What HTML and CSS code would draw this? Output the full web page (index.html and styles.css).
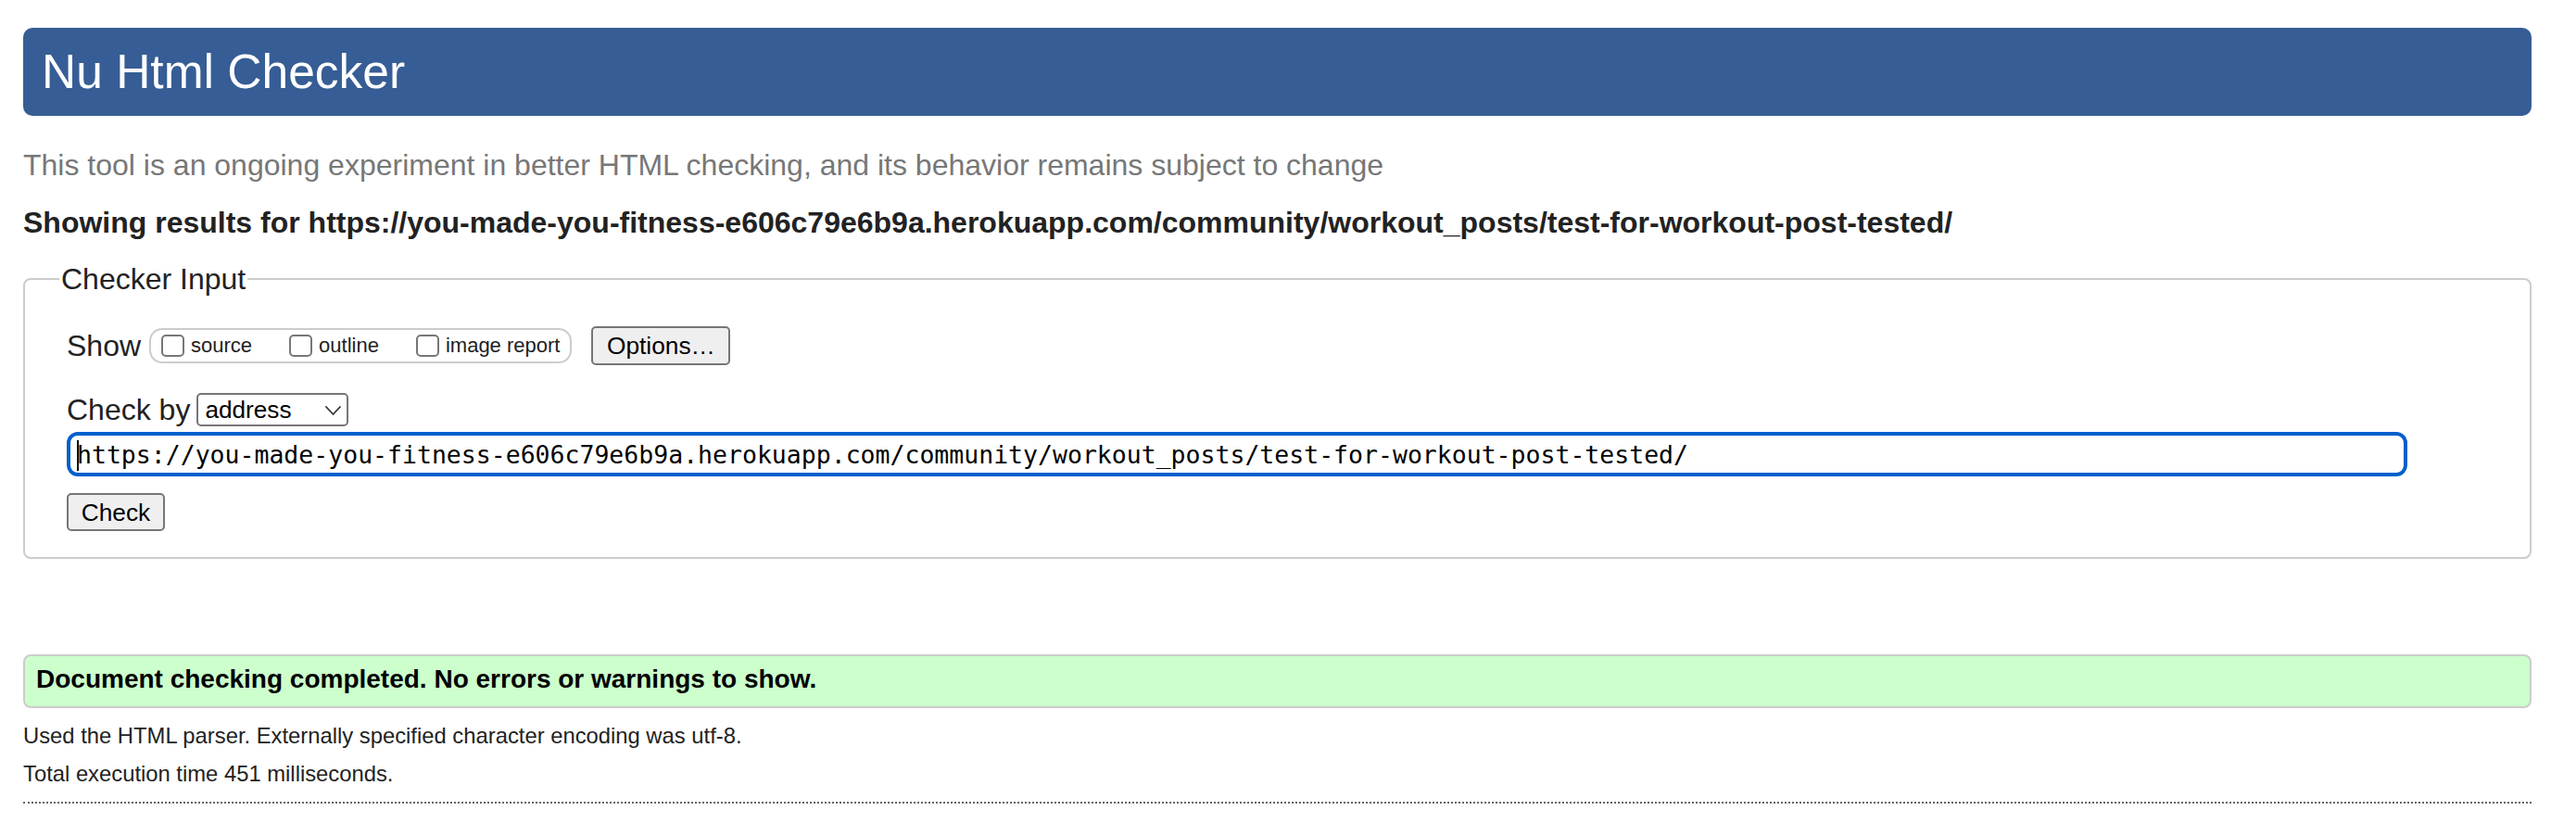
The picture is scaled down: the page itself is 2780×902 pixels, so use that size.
FILE: index.html
```html
<!DOCTYPE html>
<html lang="en">
<head>
<meta charset="utf-8">
<title>Nu Html Checker</title>
<link rel="stylesheet" href="styles.css">
</head>
<body>
<header class="masthead"><h1 class="title">Nu Html Checker</h1></header>
<p class="intro">This tool is an ongoing experiment in better HTML checking, and its behavior remains subject to change</p>
<p class="results-for">Showing results for https://you-made-you-fitness-e606c79e6b9a.herokuapp.com/community/workout_posts/test-for-workout-post-tested/</p>
<form class="checker">
  <fieldset class="checker-fieldset">
    <legend class="checker-legend">Checker Input</legend>
    <div class="row row-show">
      <span class="row-label">Show</span>
      <span class="show-group">
        <label class="opt"><input type="checkbox" class="cb"><span class="opt-text">source</span></label>
        <label class="opt"><input type="checkbox" class="cb"><span class="opt-text">outline</span></label>
        <label class="opt"><input type="checkbox" class="cb"><span class="opt-text">image report</span></label>
      </span>
      <button type="button" class="btn btn-options">Options…</button>
    </div>
    <div class="row row-by">
      <span class="row-label">Check by</span>
      <span class="select-wrap">
        <select class="select"><option>address</option></select>
        <svg class="chev" width="17" height="10" viewBox="0 0 17 10"><path d="M1 1 L8.5 9 L16 1" fill="none" stroke="#333" stroke-width="1.8" stroke-linecap="round" stroke-linejoin="round"/></svg>
      </span>
    </div>
    <div class="url-wrap">
      <input class="url" type="text" value="https://you-made-you-fitness-e606c79e6b9a.herokuapp.com/community/workout_posts/test-for-workout-post-tested/">
      <span class="caret"></span>
    </div>
    <div class="row row-submit">
      <button type="button" class="btn btn-check">Check</button>
    </div>
  </fieldset>
</form>
<p class="success">Document checking completed. No errors or warnings to show.</p>
<p class="meta meta-first">Used the HTML parser. Externally specified character encoding was utf-8.</p>
<p class="meta meta-second">Total execution time 451 milliseconds.</p>
<hr class="sep">
</body>
</html>
```
FILE: styles.css
```css
html, body {
  background: #ffffff;
}
body {
  margin: 0;
  padding: 30px 48px 0 25px;
  font-family: "Liberation Sans", Arial, Helvetica, sans-serif;
  color: #222;
}
.masthead {
  height: 95px;
  background: #365d95;
  border-radius: 10px;
  padding-left: 20px;
}
.title {
  margin: 0;
  font-size: 51.5px;
  font-weight: normal;
  line-height: 95px;
  color: #ffffff;
}
.intro {
  margin: 35px 0 0;
  font-size: 32px;
  line-height: 36px;
  color: #777;
}
.results-for {
  margin: 26px 0 0;
  font-size: 32px;
  line-height: 36px;
  font-weight: bold;
  color: #222;
}
.checker {
  margin: 25px 0 0;
}
.checker-fieldset {
  margin: 0;
  min-width: 0;
  border: 2px solid #ccc;
  border-radius: 8px;
  padding: 33px 31px 28px 45px;
}
.checker-legend {
  font-size: 32px;
  line-height: 36px;
  padding: 0 2px;
  margin-left: -8px;
  color: #222;
}
.row {
  display: flex;
  align-items: center;
}
.row-show {
  height: 42px;
}
.row-label {
  font-size: 32px;
  line-height: 36px;
  color: #222;
}
.show-group {
  display: inline-flex;
  align-items: center;
  box-sizing: border-box;
  height: 38px;
  margin-left: 9px;
  padding: 0 11px;
  border: 2px solid #ccc;
  border-radius: 14px;
}
.opt {
  display: inline-flex;
  align-items: center;
  font-size: 22px;
  line-height: 26px;
  color: #222;
}
.opt + .opt {
  margin-left: 40px;
}
.cb {
  appearance: none;
  -webkit-appearance: none;
  box-sizing: border-box;
  width: 25px;
  height: 24px;
  margin: 0 7px 0 0;
  border: 2px solid #777;
  border-radius: 5px;
  background: #fff;
}
.btn {
  box-sizing: border-box;
  margin: 0;
  padding: 0;
  border: 2px solid #767676;
  border-radius: 5px;
  background: #efefef;
  color: #000;
  font-family: "Liberation Sans", Arial, Helvetica, sans-serif;
  font-size: 26.3px;
  line-height: 30px;
  text-align: center;
}
.btn-options {
  width: 150px;
  height: 42px;
  margin-left: 21px;
}
.row-by {
  margin-top: 30px;
  height: 36px;
}
.select-wrap {
  position: relative;
  display: inline-block;
  margin-left: 7px;
  height: 36px;
}
.select {
  appearance: none;
  -webkit-appearance: none;
  box-sizing: border-box;
  width: 164px;
  height: 36px;
  margin: 0;
  padding: 0 0 0 7px;
  border: 2px solid #767676;
  border-radius: 5px;
  background: #fff;
  color: #000;
  font-family: "Liberation Sans", Arial, Helvetica, sans-serif;
  font-size: 26.2px;
}
.chev {
  position: absolute;
  left: 139px;
  top: 14px;
}
.url-wrap {
  position: relative;
  margin-top: 6px;
  height: 48px;
}
.url {
  box-sizing: border-box;
  width: 2526px;
  height: 48px;
  margin: 0;
  padding: 0 0 0 7px;
  border: 4px solid #005fcc;
  border-radius: 12px;
  outline: none;
  background: #fff;
  color: #000;
  font-family: "DejaVu Sans Mono", "Liberation Mono", monospace;
  font-size: 26.5px;
}
.caret {
  position: absolute;
  left: 11px;
  top: 9px;
  width: 2px;
  height: 33px;
  background: #000;
}
.row-submit {
  margin-top: 18px;
}
.btn-check {
  width: 106px;
  height: 41px;
}
.success {
  margin: 103px 0 0;
  border: 2px solid #ccc;
  border-radius: 8px;
  background: #ccffcc;
  padding: 9px 12px 13px 12px;
  font-size: 28px;
  line-height: 32px;
  font-weight: bold;
  color: #000;
}
.meta {
  margin: 0;
  font-size: 23.8px;
  line-height: 28px;
  color: #222;
}
.meta-first {
  margin-top: 16px;
}
.meta-second {
  margin-top: 13px;
}
.sep {
  margin: 16px 0 0;
  height: 0;
  border: 0;
  border-top: 2px dotted #666;
}
```
